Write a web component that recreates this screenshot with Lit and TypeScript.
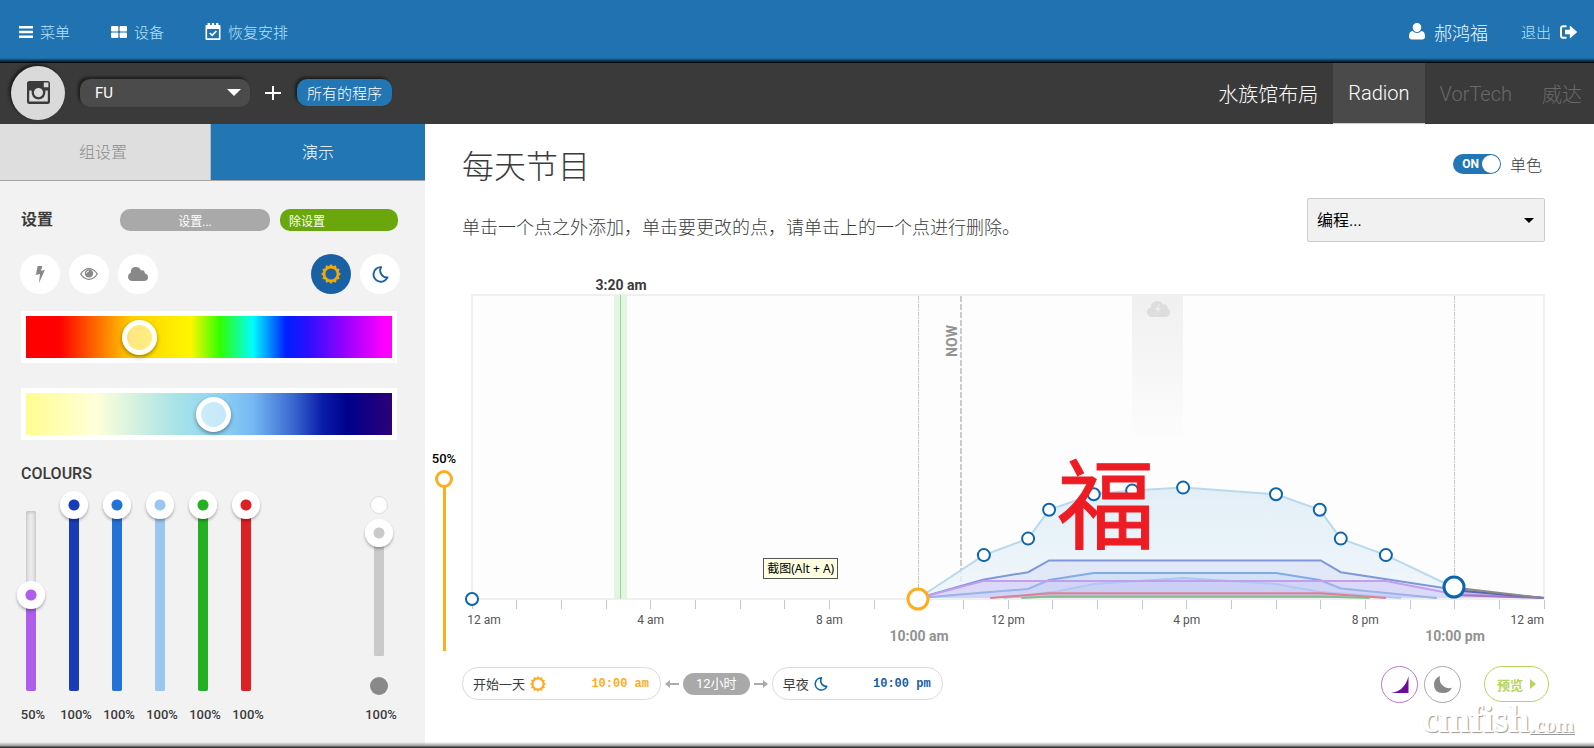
import { LitElement, html, svg, css } from "lit";
import { customElement, property, state } from "lit/decorators.js";
import { styleMap } from "lit/directives/style-map.js";
import { classMap } from "lit/directives/class-map.js";

/* ---------- icons ---------- */

const sunPath = (() => {
  const spikes = 12;
  const pts: string[] = [];
  for (let i = 0; i < spikes * 2; i++) {
    const r = i % 2 === 0 ? 10 : 7.9;
    const a = (Math.PI * i) / spikes - Math.PI / 2;
    pts.push(`${(10 + r * Math.cos(a)).toFixed(2)} ${(10 + r * Math.sin(a)).toFixed(2)}`);
  }
  return `M${pts.join("L")}Z M10 4.4a5.6 5.6 0 1 0 0 11.200a5.600 5.600 0 1 0 0-11.200Z`;
})();

const icons = {
  bars: () => html`<svg width="14" height="12" viewBox="0 0 14 12" aria-hidden="true">
    <path fill="#fff" d="M0 0h14v2.6H0zM0 4.7h14v2.6H0zM0 9.4h14V12H0z" /></svg>`,
  grid: () => html`<svg width="16" height="12" viewBox="0 0 16 12" aria-hidden="true">
    <g fill="#fff"><rect width="7.4" height="5.5" rx="1" /><rect x="8.6" width="7.4" height="5.5" rx="1" />
    <rect y="6.5" width="7.4" height="5.5" rx="1" /><rect x="8.6" y="6.5" width="7.4" height="5.5" rx="1" /></g></svg>`,
  calendar: () => html`<svg width="16" height="17" viewBox="0 0 16 17" aria-hidden="true">
    <path fill="#fff" fill-rule="evenodd" d="M1.500 2H2.600V0H5v2h1.800V0h2.400v2H11V0h2.400v2h1.100q1 0 1 1v13q0 1-1 1h-13q-1 0-1-1V3q0-1 1-1ZM2.100 6v9.300h11.800V6Z" />
    <path fill="none" stroke="#fff" stroke-width="1.700" d="M4.800 10l2.400 2.400 4.200-4.400" /></svg>`,
  user: () => html`<svg width="16" height="17" viewBox="0 0 16 17" aria-hidden="true">
    <path fill="#fff" d="M8 0a4.300 4.300 0 0 1 4.300 4.400C12.300 7 10.300 9 8 9S3.700 7 3.700 4.400A4.300 4.300 0 0 1 8 0ZM3.600 8q1.900 2.100 4.400 2.100T12.400 8Q16 8.400 16 13.600 16 16.500 13 16.500H3Q0 16.500 0 13.600 0 8.400 3.600 8Z" /></svg>`,
  logout: () => html`<svg width="17" height="14" viewBox="0 0 17 14" aria-hidden="true">
    <path fill="none" stroke="#fff" stroke-width="2" d="M6.500 1.200H3.400Q1 1.200 1 3.600v6.800q0 2.400 2.400 2.400h3.100" />
    <path fill="#fff" d="M5 4.800h4.800V1.200q0-.8.700-.3l6.200 5.600q.5.500 0 1l-6.200 5.600q-.7.500-.7-.3V9.200H5Z" /></svg>`,
  camera: () => html`<svg width="23" height="23" viewBox="0 0 23 23" aria-hidden="true">
    <path fill="#3b3b3b" fill-rule="evenodd" d="M2.500 0h18Q23 0 23 2.500v18q0 2.500-2.500 2.500h-18Q0 23 0 20.500v-18Q0 0 2.500 0ZM16.800 1.600v4.600h4.600V1.600ZM2.200 9.600v11h18.600V9.600h-2.300q.2 8.800-7 8.900Q4.300 18.400 4.500 9.600ZM11.500 7a4.600 4.600 0 1 0 0 9.200a4.600 4.600 0 1 0 0-9.200Z" /></svg>`,
  plus: () => html`<svg width="16" height="14" viewBox="0 0 16 14" aria-hidden="true"><path fill="#fff" d="M7 0h2v6h7v2H9v6H7V8H0V6h7z" /></svg>`,
  bolt: () => html`<svg width="10" height="17" viewBox="0 0 10 17" aria-hidden="true">
    <path fill="#888" d="M2.600 0H7.400L5.900 4.700 9.900 3.900 4 17 4.900 7.900.8 9Z" /></svg>`,
  eye: () => html`<svg width="18" height="12" viewBox="0 0 18 12" aria-hidden="true">
    <path fill="none" stroke="#888" stroke-width="1.300" d="M.7 6Q4.200.7 9 .7T17.300 6Q13.800 11.300 9 11.300T.7 6Z" />
    <circle cx="9" cy="5.400" r="4.200" fill="#888" /><path fill="none" stroke="#fff" d="M6.600 5.400A2.400 2.400 0 0 1 9 3" /></svg>`,
  cloud: () => html`<svg width="20" height="14" viewBox="0 0 20 14" aria-hidden="true">
    <path fill="#888" d="M4.500 14Q0 13.800 0 9.700 0 7 2.700 5.800 2.600 0 8 0 11.500 0 13 3.400 16.500 2.500 16.900 6.600 20 7.200 20 10.200 20 14 16 14Z" /></svg>`,
  sun: (color: string, size: number) => html`<svg width=${size} height=${size} viewBox="0 0 20 20" aria-hidden="true">
    <path fill=${color} fill-rule="evenodd" d=${sunPath} /></svg>`,
  moon: (color: string, size: number) => html`<svg width=${size} height=${size} viewBox="0 0 16 17" aria-hidden="true">
    <path fill="none" stroke=${color} stroke-width="1.900" stroke-linejoin="round" d="M8.600 1.100A7.300 7.300 0 1 0 15 11.400 6.900 6.900 0 0 1 8.600 1.100Z" /></svg>`,
  crescent: () => html`<svg width="18" height="17" viewBox="0 0 18 17" aria-hidden="true">
    <path fill="#888" d="M6 0Q0 2.600 0 8.400 0 17 8.800 17 15.500 17 18 11.800 13.500 13.200 9.500 10.300 4.500 6.500 6 0Z" /></svg>`,
  ramp: () => html`<svg width="18" height="17" viewBox="0 0 18 17" aria-hidden="true"><path fill="#6a0b9b" d="M17.500 0V17H0Q14 15 17.500 0Z" /></svg>`,
  arrowLeft: () => html`<svg width="14" height="8" viewBox="0 0 14 8" aria-hidden="true"><path fill="#aaa" d="M0 4 5 0V3h9v2H5v3Z" /></svg>`,
  arrowRight: () => html`<svg width="14" height="8" viewBox="0 0 14 8" aria-hidden="true"><path fill="#aaa" d="M14 4 9 0V3H0v2h9v3Z" /></svg>`,
  play: () => html`<svg width="6" height="10" viewBox="0 0 6 10" aria-hidden="true"><path fill="#b5d55c" d="M0 0 6 5 0 10Z" /></svg>`,
};

/* ---------- vertical channel slider ---------- */

@customElement("channel-slider")
class ChannelSlider extends LitElement {
  @property() label = "";
  @property() color = "#888";
  @property({ type: Number }) value = 100;

  static styles = css`
    :host { display: grid; width: 28px; height: 100%; justify-items: center; }
    .track, .fill, .input { grid-area: 1 / 1; }
    .track { width: 10px; margin: 20px 0 8px; border-radius: 2px; background: #ebebeb; box-shadow: inset 0 0 4px rgba(0, 0, 0, 0.3); }
    .fill { width: 10px; margin-bottom: 8px; align-self: end; border-radius: 0 0 2px 2px; }
    .input {
      appearance: none; writing-mode: vertical-lr; direction: rtl;
      width: 28px; height: 100%; margin: 0; background: none; cursor: pointer;
    }
    .input::-webkit-slider-thumb {
      appearance: none; width: 28px; height: 28px; border-radius: 50%;
      background: radial-gradient(circle, currentColor 5px, #fff 6px);
      box-shadow: 0 2px 3px rgba(0, 0, 0, 0.3);
    }
  `;

  render() {
    const fill = { background: this.color, height: `calc((100% - 28px) * ${this.value / 100})` };
    return html`
      <span class="track"></span>
      <span class="fill" style=${styleMap(fill)}></span>
      <input class="input" type="range" min="0" max="100" aria-label=${this.label}
        style=${styleMap({ color: this.color })} .value=${String(this.value)}
        @input=${(e: Event) => (this.value = Number((e.target as HTMLInputElement).value))} />
    `;
  }
}

/* ---------- day chart ---------- */

type Point = [hour: number, level: number];

const HOUR = 1072 / 24;
const BASE = 328;
const px = (h: number) => 1 + h * HOUR;
const py = (v: number) => BASE - v * 3;

const handles: Point[] = [
  [11.46, 14.3], [12.45, 19.8], [12.92, 29.4], [13.92, 34.6], [14.78, 35.8], [15.92, 36.8],
  [18, 34.6], [18.98, 29.4], [19.45, 19.8], [20.46, 14.3],
];

const channels: { name: string; line: string; area: string; points: Point[] }[] = [
  { name: "navy", line: "#8098d8", area: "rgba(215,222,245,.55)", points: [[10, 0], [11.46, 6.2], [12.45, 8.6], [12.92, 12.5], [19, 12.5], [19.45, 8.6], [21.98, 2.8], [24, 0]] },
  { name: "blue", line: "#80ace4", area: "rgba(190,215,243,.45)", points: [[10, 0], [11.46, 1.8], [12.45, 3], [12.92, 6], [13.92, 8.3], [18, 8.3], [18.98, 6], [19.45, 3.2], [21.6, 0]] },
  { name: "sky", line: "#adc8ee", area: "rgba(180,205,240,.3)", points: [[11.9, 0], [13.1, 2.2], [13.92, 4.7], [15.92, 6.7], [18, 4.7], [18.98, 2], [20.8, 0]] },
  { name: "violet", line: "#c39df0", area: "rgba(205,190,245,.35)", points: [[10, 0], [11.46, 5.7], [20.46, 5.7], [21.98, 1.3], [24, 0]] },
  { name: "red", line: "#dc8192", area: "rgba(220,140,170,.25)", points: [[11.6, 0], [12.92, 1.6], [19, 1.6], [20.46, 0]] },
  { name: "green", line: "#84bf94", area: "rgba(130,190,140,.4)", points: [[12.3, 0], [12.92, 0.5], [19, 0.5], [20.1, 0]] },
];

const toPath = (pts: Point[]) => "M" + pts.map(([h, v]) => `${px(h).toFixed(1)} ${py(v).toFixed(1)}`).join("L");

@customElement("day-chart")
class DayChart extends LitElement {
  static styles = css`
    :host { display: block; position: relative; }
    .plot { display: block; width: 100%; height: auto; overflow: visible; font-family: Roboto, "Noto Sans CJK SC", sans-serif; }
    .hour { font-size: 12px; fill: #555; text-anchor: middle; }
    .hour.last { text-anchor: end; }
    .mark { font-size: 14px; font-weight: 700; fill: #929292; text-anchor: middle; }
    .mark.cursor { fill: #3b3b3b; }
    .stamp { font-family: "Noto Sans CJK SC", sans-serif; font-size: 98px; font-weight: 400; fill: #ed1c24; stroke: #ed1c24; stroke-width: 1px; text-anchor: middle; }
    .tip {
      position: absolute; left: 27.2%; top: 288px; padding: 0 3px; border: 1px solid #555; background: #ffffe1;
      color: #000; font: 12px/19px "Noto Sans", "Noto Sans CJK SC", sans-serif; white-space: nowrap;
    }
  `;

  render() {
    const full: Point[] = [[10, 0], ...handles, [21.98, 3.5]];
    return html`
      <svg class="plot" viewBox="0 0 1074 380" role="img" aria-label="每天节目">
        <defs>
          <linearGradient id="day" x1="0" y1="0" x2="0" y2="1"><stop offset="0" stop-color="#dcebf6" /><stop offset="1" stop-color="#edf5fb" /></linearGradient>
          <linearGradient id="storm" x1="0" y1="0" x2="0" y2="1"><stop offset="0" stop-color="#f0f0f0" /><stop offset="1" stop-color="#fcfcfc" /></linearGradient>
        </defs>
        <rect x="1" y="25" width="1072" height="304" fill="#fdfdfd" stroke="#efefef" stroke-width="2" />
        <rect x="661" y="26" width="51" height="140" fill="url(#storm)" />
        <path d="M680 47q-4-1-4-5 0-4 4-4.500Q680 31 686 31q4 0 5.500 3.500 5-1 5 3.500 2.500 1 2.500 4.500T695 47Z" fill="#ddd" />
        <path d="M688 34l-4 6h3l-2 5 5-7h-3l2-4Z" fill="#ececec" />
        <rect x="143" y="25" width="13" height="304" fill="#e4f4e2" /><path d="M149.500 25V329" stroke="#8fdc8d" />
        <path d="M447.500 26V320" stroke="#c4c4c4" stroke-dasharray="4 1 2 1" />
        <path d="M983.500 26V310" stroke="#c4c4c4" stroke-dasharray="4 1 2 1" />
        <path d="M490 26V328" stroke="#ccc" stroke-width="2" stroke-dasharray="6 2" />
        <path d="${toPath([...full, [24, 0]])}Z" fill="url(#day)" fill-opacity=".8" />
        <path d=${toPath(full)} fill="none" stroke="#b9d9ed" stroke-width="2" />
        ${channels.map((c) => svg`
          <path d="${toPath(c.points)}Z" fill=${c.area} />
          <path d=${toPath(c.points)} fill="none" stroke=${c.line} stroke-width="2" />`)}
        <path d="${toPath([[21.98, 3.5], [24, 0], [21.98, 1.3]])}Z" fill="#b0a8b8" fill-opacity=".5" />
        <path d=${toPath([[21.98, 1], [24, 0]])} stroke="#a874c8" stroke-width="2" />
        <path d=${toPath([[21.98, 2.6], [24, 0]])} stroke="#5a66b8" stroke-width="2" />
        <path d=${toPath([[21.98, 3.5], [24, 0]])} stroke="#8a8a8a" stroke-width="2" />
        ${Array.from({ length: 25 }, (_, i) => svg`<path d="M${Math.floor(px(i)) + 0.5} 330v9" stroke="#b9cadf" />`)}
        ${["", "4 am", "8 am", "12 pm", "4 pm", "8 pm"].map((t, i) => svg`<text class="hour" x=${px(i * 4)} y="354">${t}</text>`)}
        <text class="hour" x="13" y="354">12 am</text>
        <text class="hour last" x="1073" y="354">12 am</text>
        <text class="mark cursor" x="150" y="20">3:20 am</text>
        <text class="mark" x="448" y="371">10:00 am</text>
        <text class="mark" x="984" y="371">10:00 pm</text>
        <text class="mark" transform="translate(486 71) rotate(-90)">NOW</text>
        <g fill="#fff" stroke="#0d65ab" stroke-width="2">
          <circle cx="1" cy="329" r="6" />
          ${handles.map(([h, v]) => svg`<circle cx=${px(h)} cy=${py(v)} r="6" />`)}
        </g>
        <circle cx="447" cy="329" r="10" fill="#fff" stroke="#ffac1e" stroke-width="3" />
        <circle cx="983" cy="317" r="10" fill="#fff" stroke="#0d65ab" stroke-width="3" />
        <text class="stamp" x="635" y="271">福</text>
      </svg>
      <span class="tip" role="tooltip">截图(Alt + A)</span>
    `;
  }
}

/* ---------- page ---------- */

@customElement("app-root")
class AppRoot extends LitElement {
  @state() private mono = true;

  static styles = css`
    :host {
      display: flex; flex-direction: column; min-height: 100vh; position: relative;
      font-family: Roboto, "Noto Sans CJK SC", sans-serif; color: #3b3b3b; background: #fff;
    }
    *, *::before, *::after { box-sizing: border-box; }
    button, select { font: inherit; cursor: pointer; }
    button { border: 0; padding: 0; display: flex; align-items: center; justify-content: center; }
    a { text-decoration: none; color: inherit; display: flex; align-items: center; }
    svg { display: block; flex: none; }

    .top {
      display: flex; align-items: center; justify-content: space-between; height: 63px; padding: 0 17px 0 19px;
      background: linear-gradient(#2073b0 58px, #000 63px); color: #b5e2ff; font-size: 15px; font-weight: 300;
    }
    .group { display: flex; align-items: center; gap: 41px; }
    .group.right { gap: 33px; }
    .group a { gap: 7px; }
    .group .user { gap: 9px; font-size: 18px; color: #eef8ff; }
    .group .exit { gap: 9px; }

    .bar { display: flex; align-items: center; height: 61px; padding: 0 0 2px 11px; background: #3a3a3a; color: #fff; }
    .avatar { width: 54px; height: 54px; border-radius: 50%; background: #dadada; box-shadow: -2px -2px 3px #1c1c1c; }
    .pick { position: relative; display: flex; align-items: center; margin-left: 15px; }
    .pick select {
      appearance: none; width: 170px; height: 28px; padding: 0 15px; border: 0; border-radius: 10px;
      background: #4b4b4b; color: #fff; font-size: 15px; box-shadow: -2px -2px 3px #1c1c1c;
    }
    .caret { position: absolute; right: 9px; border: 7px solid transparent; border-top-color: currentColor; border-bottom: 0; pointer-events: none; }
    .add { width: 16px; height: 28px; margin: 0 16px 0 15px; background: none; }
    .all { height: 27px; padding: 0 10px; border-radius: 10px; background: #2176b3; color: #fff; font-size: 15px; font-weight: 300; box-shadow: -2px -2px 3px #1c1c1c; }
    .tabs { display: flex; align-self: stretch; margin: 0 0 -2px auto; font-size: 20px; font-weight: 300; }
    .tabs a { padding: 0 15px; }
    .tabs .on { background: #4a4a4a; border-bottom: 1px solid #ccc; }
    .tabs .off { color: #696969; }
    .tabs .end { padding-right: 12px; }

    .body { display: flex; flex: 1; }
    .side { flex: 0 0 425px; background: #f2f2f2; }
    .modes { display: flex; height: 57px; font-size: 16px; font-weight: 300; }
    .modes button { flex: 1; padding-bottom: 2px; background: #2176b3; color: #fff; border-bottom: 1px solid #a6a6a6; }
    .modes .idle { flex: 0 0 211px; padding-right: 4px; background: #dedede; color: #8b8b8b; border-right: 1px solid #b8b8b8; }
    .controls { padding: 28px 25px 24px 20px; }
    .presets { display: flex; align-items: center; height: 22px; }
    .presets h2 { margin: 0; padding-left: 1px; flex: 1; font-size: 16px; font-weight: 700; line-height: 22px; }
    .presets button { height: 22px; border-radius: 10px; font-size: 12px; color: #fff; }
    .presets .load { width: 150px; background: #a9a9a9; margin-right: 10px; }
    .presets .clear { width: 118px; background: #6aa70d; margin-right: 2px; padding-left: 9px; justify-content: flex-start; }
    .rounds { display: flex; gap: 9px; margin-top: 23px; }
    .rounds button { width: 40px; height: 40px; border-radius: 50%; background: #fff; }
    .rounds .day { margin-left: auto; background: #1a60a4; }
    .spectrum {
      display: block; appearance: none; width: calc(100% - 4px); height: 52px; margin: 17px 3px 0 1px;
      border: 5px solid #fff; cursor: pointer;
      background: linear-gradient(90deg, #f00 9%, #ffd000 29%, #fff600 45%, #30ff00 53%, #00fcff 62%, #0020ff 71%, #2b0fff 77%, #a000ff 88%, #f0f 98%);
    }
    .spectrum.kelvin {
      margin-top: 25px;
      background: linear-gradient(90deg, #fffd8e, #ffffd9 19%, #a8e3e6 41%, #8dd3f5 53%, #75b8f2 62%, #3a68cf 73%, #0a1ca8 81%, #00008b 88%, #2d0079);
    }
    .spectrum::-webkit-slider-thumb {
      appearance: none; width: 35px; height: 35px; border: 5px solid #fff; border-radius: 50%;
      background: rgba(255, 255, 255, 0.5); box-shadow: 0 2px 4px rgba(0, 0, 0, 0.4);
    }
    .colours { margin: 24px 0 7px; padding-left: 1px; font-size: 16px; line-height: 20px; font-weight: 500; }
    .sliders { display: flex; margin-left: -11px; }
    .channel { display: flex; flex-direction: column; align-items: center; width: 43px; }
    .channel.master { margin-left: auto; }
    .rail { display: flex; flex-direction: column; align-items: center; height: 208px; }
    .percent { margin-top: 8px; padding-left: 5px; font-size: 13px; line-height: 16px; font-weight: 500; }
    .dot { flex: none; width: 18px; height: 18px; border-radius: 50%; }
    .dot.high { margin: 5px 0; background: #fff; border: 1px solid #ddd; }
    .dot.low { margin-top: 13px; background: #898989; }
    .short { height: 145px; }

    .main { flex: 1; min-width: 0; padding: 22px 0 0 5px; }
    .head, .intro { display: flex; justify-content: space-between; padding: 0 49px 0 32px; }
    .head h1 { margin: 0; font-size: 32px; line-height: 42px; font-weight: 300; }
    .mono { display: flex; align-items: center; gap: 9px; height: 36px; padding-right: 3px; font-size: 16px; font-weight: 300; cursor: pointer; }
    .mono input { position: absolute; opacity: 0; }
    .switch {
      display: flex; align-items: center; justify-content: flex-end; gap: 3px; width: 48px; height: 20px; padding: 1px;
      border-radius: 10px; background: #2176b3; color: #fff; font-size: 12px; font-weight: 700;
    }
    .switch::after { content: ""; width: 18px; height: 18px; border-radius: 50%; background: #fff; }
    .switch.off { flex-direction: row-reverse; background: #999; }
    .intro { align-items: flex-end; margin-top: 10px; }
    .intro p { margin: 0; font-size: 18px; line-height: 28px; font-weight: 300; }
    .pick.program select {
      width: 238px; height: 44px; padding: 0 9px; border: 1px solid #ccc; border-radius: 2px;
      background: #f1f1f1; color: #000; font-size: 16px; box-shadow: none;
    }
    .pick.program { margin: 0; color: #000; }
    .program .caret { right: 11px; border-width: 5px; border-bottom: 0; }
    .stage { display: flex; gap: 13px; margin-top: 28px; padding-right: 49px; }
    .stage day-chart { flex: 1; min-width: 0; }
    .level { display: flex; flex-direction: column; align-items: center; width: 28px; padding-top: 180px; color: #000; font-size: 13px; line-height: 18px; font-weight: 500; }
    .level input {
      appearance: none; writing-mode: vertical-lr; direction: rtl; width: 18px; height: 181px; margin: 2px 0 0;
      background: linear-gradient(#ffac1e, #ffac1e) center bottom / 3px 172px no-repeat; cursor: pointer;
    }
    .level input::-webkit-slider-thumb { appearance: none; width: 18px; height: 18px; border: 3px solid #ffac1e; border-radius: 50%; background: #fff; }

    .foot { display: flex; align-items: flex-start; margin-top: 15px; padding: 0 45px 0 32px; }
    .times { display: flex; align-items: center; gap: 4px; height: 35px; }
    .span { display: flex; align-items: center; width: 199px; height: 33px; padding: 0 11px 0 10px; gap: 5px; border: 1px solid #dcdcdc; border-radius: 16px; background: #fff; color: #3b3b3b; font-size: 13px; }
    .span.night { width: 171px; }
    .span time { margin-left: auto; font: 700 12px/16px "Liberation Mono", monospace; color: #ffac1e; }
    .span.night time { color: #1a5da3; }
    .hours { height: 22px; padding: 0 13px; border-radius: 11px; background: #a9a9a9; color: #fff; font-size: 13px; line-height: 22px; }
    .foot .ring { width: 37px; height: 37px; border: 1px solid #aaa; border-radius: 50%; background: #fff; }
    .foot .ring.ramp { margin-left: auto; margin-right: 6px; border-color: #b878d0; }
    .foot .preview { gap: 7px; width: 65px; height: 36px; margin-left: 23px; border: 1px solid #b5d55c; border-radius: 18px; background: #fff; color: #b5d55c; font-size: 13px; font-weight: 700; }

    .watermark { position: absolute; right: 20px; bottom: 4px; font: 700 38px/38px "Liberation Serif", serif; color: #fff; text-shadow: 1px 1px 1px #999; }
    .watermark small { font-size: 22px; text-decoration: underline 1px; text-underline-offset: 1px; }
    .shade { position: absolute; left: 0; right: 0; bottom: 0; height: 6px; background: linear-gradient(rgba(120, 120, 120, 0), #999 4px, #333 5px); }
  `;

  private colours = [
    { name: "UV", color: "#ae5eea", value: 50 },
    { name: "Royal blue", color: "#183bb7", value: 100 },
    { name: "Blue", color: "#2372d5", value: 100 },
    { name: "White", color: "#9bc6f0", value: 100 },
    { name: "Green", color: "#23b123", value: 100 },
    { name: "Red", color: "#dc2125", value: 100 },
  ];

  render() {
    return html`
      <header class="top">
        <nav class="group">
          <a href="#menu">${icons.bars()}菜单</a>
          <a href="#devices">${icons.grid()}设备</a>
          <a href="#schedule">${icons.calendar()}恢复安排</a>
        </nav>
        <nav class="group right">
          <a class="user" href="#user">${icons.user()}郝鸿福</a>
          <a class="exit" href="#logout">退出${icons.logout()}</a>
        </nav>
      </header>

      <div class="bar">
        <button class="avatar" aria-label="Photo">${icons.camera()}</button>
        <span class="pick"><select aria-label="Aquarium"><option>FU</option></select><i class="caret"></i></span>
        <button class="add" aria-label="Add">${icons.plus()}</button>
        <button class="all">所有的程序</button>
        <nav class="tabs">
          <a href="#layout">水族馆布局</a>
          <a class="on" href="#radion">Radion</a>
          <a class="off" href="#vortech">VorTech</a>
          <a class="off end" href="#weida">威达</a>
        </nav>
      </div>

      <div class="body">
        <aside class="side">
          <div class="modes"><button class="idle">组设置</button><button>演示</button></div>
          <div class="controls">
            <div class="presets"><h2>设置</h2><button class="load">设置...</button><button class="clear">除设置</button></div>
            <div class="rounds">
              <button aria-label="Lightning">${icons.bolt()}</button>
              <button aria-label="View">${icons.eye()}</button>
              <button aria-label="Clouds">${icons.cloud()}</button>
              <button class="day" aria-label="Day">${icons.sun("#f5a906", 20)}</button>
              <button aria-label="Night">${icons.moon("#1a60a4", 17)}</button>
            </div>
            <input class="spectrum" type="range" aria-label="Hue" min="0" max="200" value="58" />
            <input class="spectrum kelvin" type="range" aria-label="Colour temperature" min="0" max="200" value="103" />
            <h2 class="colours">COLOURS</h2>
            <div class="sliders">
              ${this.colours.map((c) => html`
                <div class="channel">
                  <div class="rail"><channel-slider .label=${c.name} .color=${c.color} .value=${c.value}></channel-slider></div>
                  <span class="percent">${c.value}%</span>
                </div>`)}
              <div class="channel master">
                <div class="rail">
                  <span class="dot high"></span>
                  <div class="short"><channel-slider .label=${"Brightness"} .color=${"#cacaca"} .value=${100}></channel-slider></div>
                  <span class="dot low"></span>
                </div>
                <span class="percent">100%</span>
              </div>
            </div>
          </div>
        </aside>

        <main class="main">
          <div class="head">
            <h1>每天节目</h1>
            <label class="mono">
              <input type="checkbox" .checked=${this.mono} @change=${() => (this.mono = !this.mono)} />
              <span class=${classMap({ switch: true, off: !this.mono })}>${this.mono ? "ON" : "OFF"}</span>单色
            </label>
          </div>
          <div class="intro">
            <p>单击一个点之外添加，单击要更改的点，请单击上的一个点进行删除。</p>
            <span class="pick program"><select aria-label="Program"><option>编程...</option></select><i class="caret"></i></span>
          </div>
          <div class="stage">
            <label class="level">50%<input type="range" min="0" max="50" value="50" /></label>
            <day-chart></day-chart>
          </div>
          <div class="foot">
            <div class="times">
              <button class="span">开始一天${icons.sun("#ffac1e", 16)}<time>10:00 am</time></button>
              ${icons.arrowLeft()}<span class="hours">12小时</span>${icons.arrowRight()}
              <button class="span night">早夜${icons.moon("#0d65ab", 14)}<time>10:00 pm</time></button>
            </div>
            <button class="ring ramp" aria-label="Ramp">${icons.ramp()}</button>
            <button class="ring" aria-label="Moonlight">${icons.crescent()}</button>
            <button class="preview">预览${icons.play()}</button>
          </div>
        </main>
      </div>
      <span class="watermark">cmfish<small>.com</small></span>
      <div class="shade"></div>
    `;
  }
}
